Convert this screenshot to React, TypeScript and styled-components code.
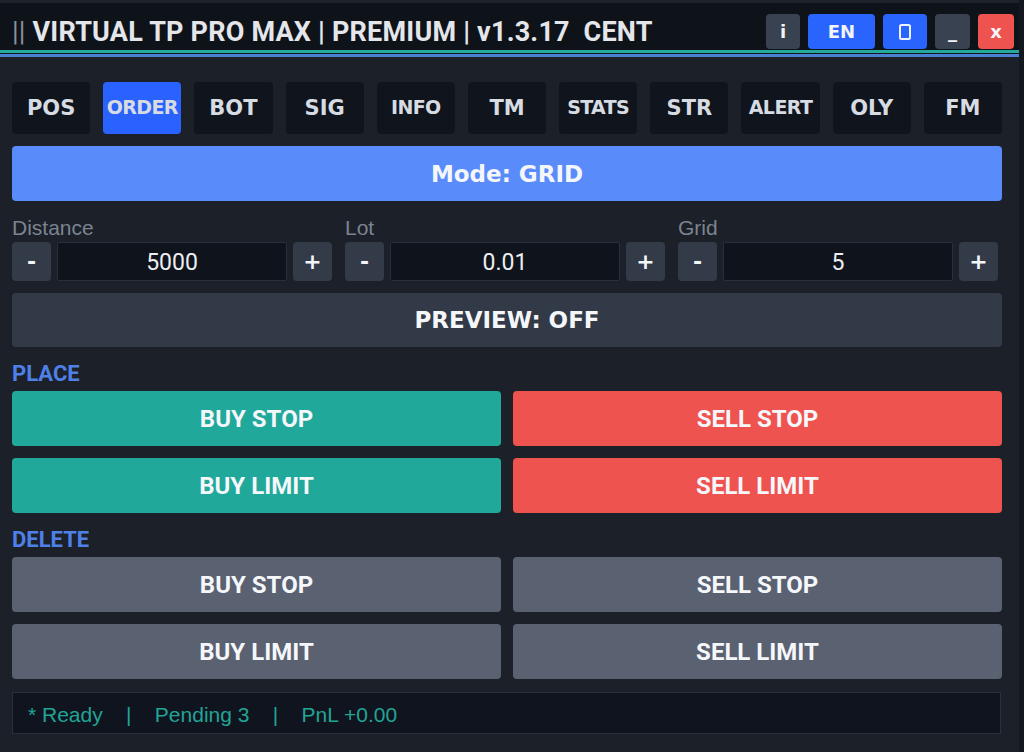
import styled, { createGlobalStyle } from "styled-components";

const GlobalStyle = createGlobalStyle`
  html, body {
    margin: 0;
    padding: 0;
    background: #131820;
  }
  * {
    box-sizing: border-box;
  }
`;

const Window = styled.div`
  width: 1019px;
  height: 752px;
  background: #1b2029;
  display: flex;
  flex-direction: column;
  font-family: Roboto, "Liberation Sans", sans-serif;
  color: #eef0f3;
`;

const TitleBar = styled.div`
  height: 50px;
  border-top: 3px solid #1d222b;
  background: #0e1219;
  padding: 11px 5px 1px 12px;
  display: flex;
  align-items: center;
`;

const Title = styled.div`
  flex: 1;
  font-size: 27px;
  font-weight: 700;
  color: #e4e6ea;
  white-space: pre;
  letter-spacing: 0.2px;

  .grip {
    color: #8b9099;
    font-weight: 400;
  }
`;

const TitleButtons = styled.div`
  display: flex;
  gap: 8px;
  height: 35px;
`;

const TitleButton = styled.div<{ $kind: "gray" | "blue" | "red"; $w: number }>`
  width: ${(p) => p.$w}px;
  height: 35px;
  border-radius: 4px;
  display: flex;
  align-items: center;
  justify-content: center;
  font-family: "DejaVu Sans", sans-serif;
  font-size: 18px;
  font-weight: 700;
  color: #f2f4f7;
  background: ${(p) =>
    p.$kind === "blue" ? "#2a64ff" : p.$kind === "red" ? "#ef5350" : "#394250"};
`;

const Divider = styled.div`
  height: 7px;
  border-top: 3px solid #24a99b;
  border-bottom: 3px solid #4a80d2;
  background: #101820;
`;

const Body = styled.div`
  flex: 1;
  padding: 25px 17px 0 12px;
  display: flex;
  flex-direction: column;
  gap: 12px;
`;

const Tabs = styled.div`
  display: grid;
  grid-template-columns: repeat(11, 1fr);
  gap: 13px;
  height: 52px;
`;

const Tab = styled.div<{ $active?: boolean; $small?: boolean }>`
  border-radius: 4px;
  background: ${(p) => (p.$active ? "#2962ff" : "#10141c")};
  display: flex;
  align-items: center;
  justify-content: center;
  padding-bottom: ${(p) => (p.$small ? "3px" : "0")};
  font-family: "DejaVu Sans", sans-serif;
  font-weight: 700;
  font-size: ${(p) => (p.$small ? "19px" : "21px")};
  color: #d7dbe2;
  letter-spacing: ${(p) => (p.$small ? "-0.6px" : "0")};
`;

const WideBar = styled.div<{ $bg: string; $h: number }>`
  height: ${(p) => p.$h}px;
  border-radius: 4px;
  background: ${(p) => p.$bg};
  display: flex;
  align-items: center;
  justify-content: center;
  font-family: "DejaVu Sans", sans-serif;
  font-weight: 700;
  font-size: 23px;
  color: #f4f6fa;
`;

const Fields = styled.div`
  display: grid;
  grid-template-columns: repeat(3, 320px);
  gap: 13px;
`;

const Field = styled.div`
  display: flex;
  flex-direction: column;
  gap: 2px;
`;

const FieldLabel = styled.div`
  height: 27px;
  padding-top: 3px;
  line-height: 24px;
  font-family: "Liberation Sans", sans-serif;
  font-size: 21px;
  color: #7c8490;
`;

const Spinner = styled.div`
  display: flex;
  gap: 6px;
  height: 39px;
`;

const StepButton = styled.div`
  width: 39px;
  border-radius: 4px;
  background: #323b47;
  display: flex;
  align-items: center;
  justify-content: center;
  font-family: "DejaVu Sans", sans-serif;
  font-size: 22px;
  font-weight: 700;
  color: #f2f4f7;
`;

const ValueBox = styled.div`
  flex: 1;
  background: #0f131c;
  border: 1px solid #29303b;
  border-radius: 2px;
  display: flex;
  align-items: center;
  justify-content: center;
  padding-top: 2px;
  font-size: 23px;
  color: #eceef2;
`;

const Section = styled.div`
  display: flex;
  flex-direction: column;
  gap: 4px;
`;

const SectionLabel = styled.div`
  height: 28px;
  line-height: 30px;
  font-size: 22px;
  font-weight: 700;
  color: #4e80e8;
`;

const ActionGrid = styled.div`
  display: grid;
  grid-template-columns: 1fr 1fr;
  grid-auto-rows: 55px;
  gap: 12px;
`;

const ActionButton = styled.div<{ $tone: "buy" | "sell" | "muted" }>`
  border-radius: 4px;
  background: ${(p) =>
    p.$tone === "buy" ? "#20a89a" : p.$tone === "sell" ? "#ef5350" : "#5a6272"};
  display: flex;
  align-items: center;
  justify-content: center;
  font-size: 24px;
  font-weight: 700;
  color: #f5f7fa;
`;

const StatusBar = styled.div`
  height: 42px;
  margin-top: 1px;
  margin-right: 1px;
  background: #10141e;
  border: 1px solid #2a313c;
  display: flex;
  align-items: center;
  padding: 3px 0 0 15px;
  font-family: "Liberation Sans", sans-serif;
  font-size: 21px;
  color: #22a497;
  white-space: pre;
`;

const tabs = [
  { label: "POS" },
  { label: "ORDER", small: true, active: true },
  { label: "BOT" },
  { label: "SIG" },
  { label: "INFO", small: true },
  { label: "TM" },
  { label: "STATS", small: true },
  { label: "STR" },
  { label: "ALERT", small: true },
  { label: "OLY" },
  { label: "FM" },
];

const fields = [
  { label: "Distance", value: "5000" },
  { label: "Lot", value: "0.01" },
  { label: "Grid", value: "5" },
];

const App = () => {
  return (
    <>
      <GlobalStyle />
      <Window>
        <TitleBar>
          <Title>
            <span className="grip">||</span> VIRTUAL TP PRO MAX | PREMIUM | v1.3.17  CENT
          </Title>
          <TitleButtons>
            <TitleButton $kind="gray" $w={34}>i</TitleButton>
            <TitleButton $kind="blue" $w={67}>EN</TitleButton>
            <TitleButton $kind="blue" $w={44}>
              <svg width="12" height="16" viewBox="0 0 12 16">
                <rect x="1" y="1" width="10" height="14" rx="1.5" fill="none" stroke="#eef2ff" strokeWidth="2" />
              </svg>
            </TitleButton>
            <TitleButton $kind="gray" $w={35}>_</TitleButton>
            <TitleButton $kind="red" $w={36}>x</TitleButton>
          </TitleButtons>
        </TitleBar>
        <Divider />
        <Body>
          <Tabs>
            {tabs.map((t) => (
              <Tab key={t.label} $active={t.active} $small={t.small}>
                {t.label}
              </Tab>
            ))}
          </Tabs>

          <WideBar $bg="#598cfa" $h={55}>Mode: GRID</WideBar>

          <Fields>
            {fields.map((f) => (
              <Field key={f.label}>
                <FieldLabel>{f.label}</FieldLabel>
                <Spinner>
                  <StepButton>-</StepButton>
                  <ValueBox>{f.value}</ValueBox>
                  <StepButton>+</StepButton>
                </Spinner>
              </Field>
            ))}
          </Fields>

          <WideBar $bg="#313a46" $h={54}>PREVIEW: OFF</WideBar>

          <Section>
            <SectionLabel>PLACE</SectionLabel>
            <ActionGrid>
              <ActionButton $tone="buy">BUY STOP</ActionButton>
              <ActionButton $tone="sell">SELL STOP</ActionButton>
              <ActionButton $tone="buy">BUY LIMIT</ActionButton>
              <ActionButton $tone="sell">SELL LIMIT</ActionButton>
            </ActionGrid>
          </Section>

          <Section>
            <SectionLabel>DELETE</SectionLabel>
            <ActionGrid>
              <ActionButton $tone="muted">BUY STOP</ActionButton>
              <ActionButton $tone="muted">SELL STOP</ActionButton>
              <ActionButton $tone="muted">BUY LIMIT</ActionButton>
              <ActionButton $tone="muted">SELL LIMIT</ActionButton>
            </ActionGrid>
          </Section>

          <StatusBar>{"* Ready    |    Pending 3    |    PnL +0.00"}</StatusBar>
        </Body>
      </Window>
    </>
  );
};

export default App;
